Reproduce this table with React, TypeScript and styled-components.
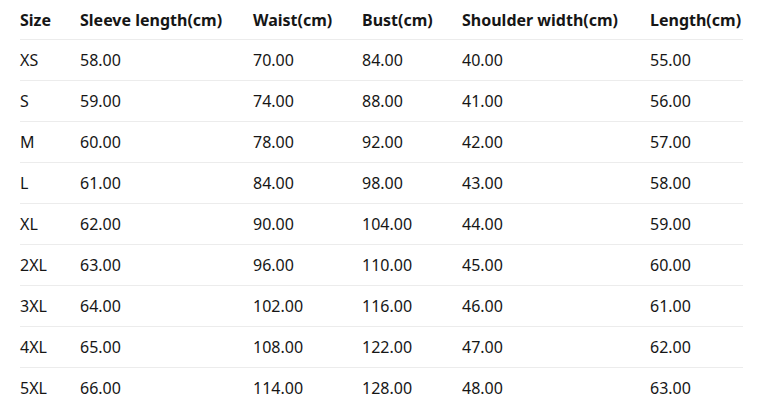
import React from 'react';
import styled, { createGlobalStyle } from 'styled-components';

const GlobalStyle = createGlobalStyle`
  html, body {
    margin: 0;
    padding: 0;
    background: #fff;
  }
  body {
    font-family: "Noto Sans", "Open Sans", Arial, sans-serif;
    color: #161616;
  }
`;

const Table = styled.div`
  margin: 0 19px 0 20px;
  display: grid;
  grid-template-columns: 60px 173px 109px 100px 188px 1fr;
`;

const Row = styled.div<{ $last?: boolean }>`
  display: contents;
  & > div {
    border-bottom: ${(p) => (p.$last ? 'none' : '1px solid #ececec')};
  }
`;

const Cell = styled.div<{ $head?: boolean }>`
  height: ${(p) => (p.$head ? '39px' : '40px')};
  display: flex;
  align-items: center;
  font-size: 16px;
  font-weight: ${(p) => (p.$head ? 700 : 400)};
  white-space: nowrap;
`;

const headers = ['Size', 'Sleeve length(cm)', 'Waist(cm)', 'Bust(cm)', 'Shoulder width(cm)', 'Length(cm)'];

const rows = [
  ['XS', '58.00', '70.00', '84.00', '40.00', '55.00'],
  ['S', '59.00', '74.00', '88.00', '41.00', '56.00'],
  ['M', '60.00', '78.00', '92.00', '42.00', '57.00'],
  ['L', '61.00', '84.00', '98.00', '43.00', '58.00'],
  ['XL', '62.00', '90.00', '104.00', '44.00', '59.00'],
  ['2XL', '63.00', '96.00', '110.00', '45.00', '60.00'],
  ['3XL', '64.00', '102.00', '116.00', '46.00', '61.00'],
  ['4XL', '65.00', '108.00', '122.00', '47.00', '62.00'],
  ['5XL', '66.00', '114.00', '128.00', '48.00', '63.00'],
];

export default function App() {
  return (
    <>
      <GlobalStyle />
      <Table>
        <Row>
          {headers.map((h) => (
            <Cell key={h} $head>{h}</Cell>
          ))}
        </Row>
        {rows.map((r, i) => (
          <Row key={r[0]} $last={i === rows.length - 1}>
            {r.map((v, j) => (
              <Cell key={j}>{v}</Cell>
            ))}
          </Row>
        ))}
      </Table>
    </>
  );
}
